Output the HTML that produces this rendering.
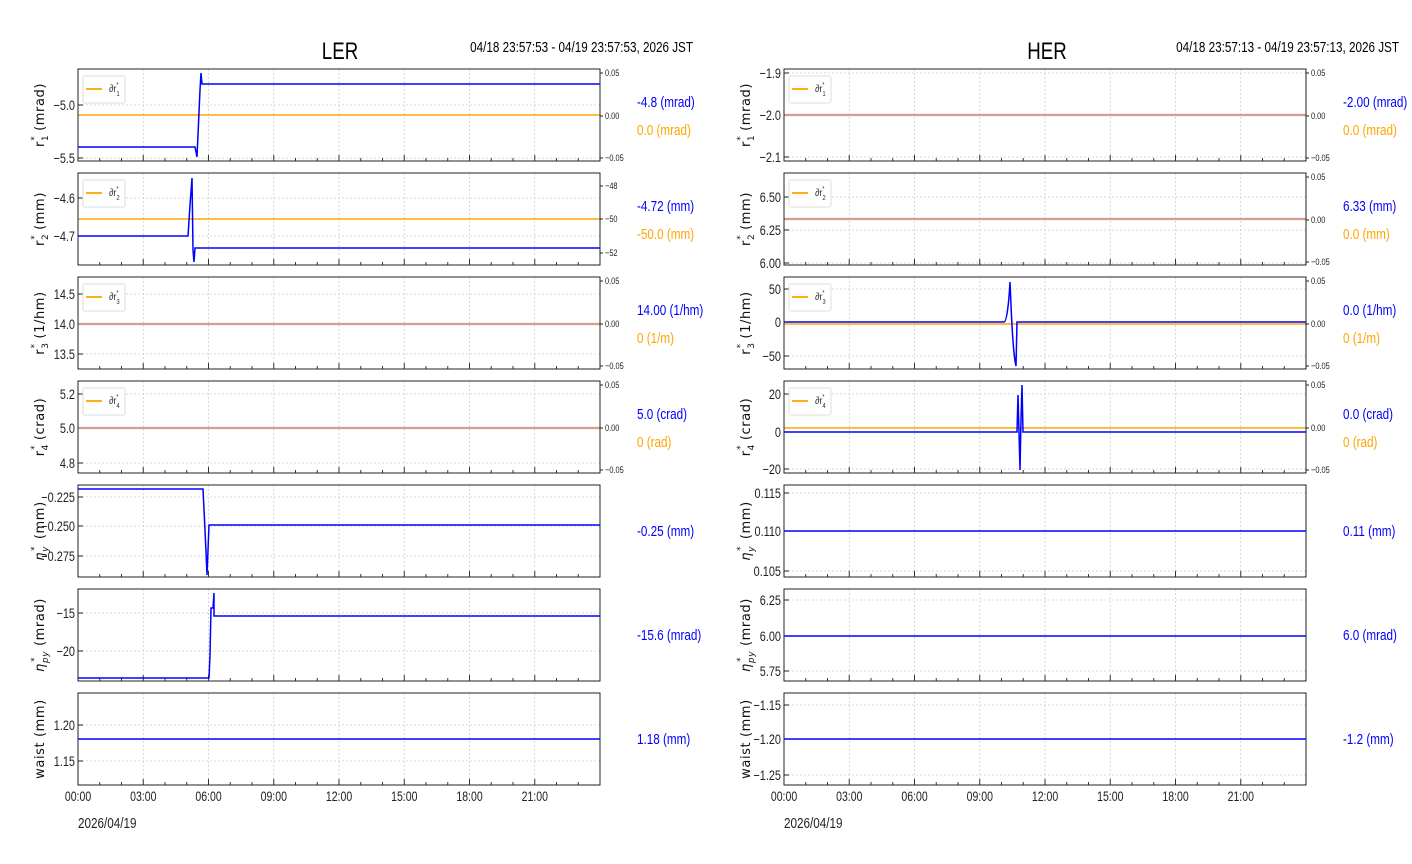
<!DOCTYPE html>
<html><head><meta charset="utf-8"><style>
html,body{margin:0;padding:0;background:#fff;}
svg{display:block;}
text{font-family:"Liberation Sans",sans-serif;}
.yl{font-family:"DejaVu Sans","Liberation Sans",sans-serif;font-size:13px;letter-spacing:0.6px;}
</style></head><body>
<svg id="s" xmlns="http://www.w3.org/2000/svg" width="1412" height="864" viewBox="0 0 1412 864"></svg>
<script>
const S=document.getElementById('s');let o='';
const W=522,H=92,tops=[69,173,277,381,485,589,693];
function T(x,y,size,anchor,fill,c,sx){sx=sx||0.78;return `<text transform="translate(${x},${y}) scale(${sx},1)" font-size="${size}" text-anchor="${anchor}" fill="${fill}">${c}</text>`;}
function panel(x0,i,yt,rt,blue,orange,ylab,leg,vals){
 const y0=tops[i];
 for(let h=3;h<24;h+=3){const x=x0+h*W/24;o+=`<line x1="${x}" y1="${y0}" x2="${x}" y2="${y0+H}" stroke="#ccc" stroke-width="0.8" stroke-dasharray="2,2"/>`;}
 yt.forEach(t=>{o+=`<line x1="${x0}" y1="${t[1]}" x2="${x0+W}" y2="${t[1]}" stroke="#ccc" stroke-width="0.8" stroke-dasharray="2,2"/>`;
  o+=`<line x1="${x0}" y1="${t[1]}" x2="${x0+5}" y2="${t[1]}" stroke="#222"/>`;
  o+=T(x0-3,t[1]+5,14,'end','#222',t[0]);});
 for(let h=1;h<24;h++){const x=x0+h*W/24;const l=h%3==0?6:3;o+=`<line x1="${x}" y1="${y0+H}" x2="${x}" y2="${y0+H-l}" stroke="#333"/>`;}
 if(rt){rt.forEach(t=>{o+=`<line x1="${x0+W}" y1="${t[1]}" x2="${x0+W+3}" y2="${t[1]}" stroke="#222"/>`;
  o+=T(x0+W+5,t[1]+3,9.5,'start','#222',t[0]);});}
 if(blue.ov){o+=`<line x1="${x0}" x2="${x0+W}" y1="${orange}" y2="${orange}" stroke="#d99a8f" stroke-width="2.2"/>`;}
 else{ if(orange)o+=`<line x1="${x0}" x2="${x0+W}" y1="${orange}" y2="${orange}" stroke="#ffa500" stroke-width="1.5"/>`;
  o+=`<path d="${blue.d}" fill="none" stroke="#0000ff" stroke-width="1.5"/>`;}
 o+=`<rect x="${x0}" y="${y0}" width="${W}" height="${H}" fill="none" stroke="#222" stroke-width="1"/>`;
 if(leg){o+=`<rect x="${x0+5}" y="${y0+7}" width="42" height="27" rx="2" fill="#fff" fill-opacity="0.85" stroke="#ddd"/>`;
  o+=`<line x1="${x0+8}" x2="${x0+24}" y1="${y0+20}" y2="${y0+20}" stroke="#ffa500" stroke-width="1.8"/>`;
  o+=T(x0+31,y0+23,10.5,'start','#333',`∂r<tspan font-size="7" dy="4">${leg}</tspan><tspan font-size="7" dx="-4" dy="-9">*</tspan>`,0.85);}
 const cy=y0+H/2;o+=`<text class="yl" transform="translate(${x0-34},${cy}) rotate(-90)" text-anchor="middle" fill="#111">${ylab}</text>`;
 const tx=x0+W+37;
 if(vals.length==2){o+=T(tx,y0+38,15,'start','#0000ff',vals[0])+T(tx,y0+66,15,'start','#ffa500',vals[1]);}
 else o+=T(tx,cy+5,15,'start','#0000ff',vals[0]);
}
const r=(n,u)=>`r<tspan font-size="9" dy="4">${n}</tspan><tspan font-size="9" dx="-6" dy="-11">*</tspan><tspan dy="7">  (${u})</tspan>`;
const eta=(s,u)=>`<tspan font-style="italic">η</tspan><tspan font-size="9" dy="4" font-style="italic">${s}</tspan><tspan font-size="9" dx="${s.length>1?-11:-5}" dy="-11">*</tspan><tspan dy="7" dx="${s.length>1?6:2}">  (${u})</tspan>`;
const R3=[["0.05",73],["0.00",116],["−0.05",158]];
function rts(i){const t=tops[i];return [["0.05",t+4],["0.00",t+47],["−0.05",t+89]];}
let L=78;
panel(L,0,[["−5.0",105],["−5.5",158]],R3,{d:"M78,147H195L197,157L200,90L201,73L202,84H600"},115,r(1,'mrad'),1,["-4.8 (mrad)","0.0 (mrad)"]);
panel(L,1,[["−4.6",198],["−4.7",236]],[["−48",186],["−50",219],["−52",253]],{d:"M78,236H188L190,205L192,178L193,250L194,262L195,248H600"},219,r(2,'mm'),2,["-4.72 (mm)","-50.0 (mm)"]);
panel(L,2,[["14.5",294],["14.0",324],["13.5",354]],rts(2),{d:"",ov:1},324,r(3,'1/hm'),3,["14.00 (1/hm)","0 (1/m)"]);
panel(L,3,[["5.2",394],["5.0",428],["4.8",463]],rts(3),{d:"",ov:1},428,r(4,'crad'),4,["5.0 (crad)","0 (rad)"]);
panel(L,4,[["−0.225",497],["−0.250",526],["−0.275",556]],null,{d:"M78,489H203L205,530L206,552L207,575L208,550L209,525H600"},null,eta('y','mm'),0,["-0.25 (mm)"]);
panel(L,5,[["−15",613],["−20",651]],null,{d:"M78,678H209L210,655L211,608H213L214,593L214,616H600"},null,eta('py','mrad'),0,["-15.6 (mrad)"]);
panel(L,6,[["1.20",725],["1.15",761]],null,{d:"M78,739H600"},null,'waist (mm)',0,["1.18 (mm)"]);
let X=784;
panel(X,0,[["−1.9",73],["−2.0",115],["−2.1",157]],R3,{d:"",ov:1},115,r(1,'mrad'),1,["-2.00 (mrad)","0.0 (mrad)"]);
panel(X,1,[["6.50",197],["6.25",230],["6.00",263]],rts(1),{d:"",ov:1},219,r(2,'mm'),2,["6.33 (mm)","0.0 (mm)"]);
panel(X,2,[["50",289],["0",322],["−50",356]],rts(2),{d:"M784,322H1004C1007,322 1009,300 1010,282C1011,300 1012,350 1016,366L1017,322H1306"},324,r(3,'1/hm'),3,["0.0 (1/hm)","0 (1/m)"]);
panel(X,3,[["20",394],["0",432],["−20",469]],rts(3),{d:"M784,432H1017L1018,395L1019,432L1020,470L1021,420L1022,385L1023,432H1306"},428,r(4,'crad'),4,["0.0 (crad)","0 (rad)"]);
panel(X,4,[["0.115",493],["0.110",531],["0.105",571]],null,{d:"M784,531H1306"},null,eta('y','mm'),0,["0.11 (mm)"]);
panel(X,5,[["6.25",600],["6.00",636],["5.75",671]],null,{d:"M784,636H1306"},null,eta('py','mrad'),0,["6.0 (mrad)"]);
panel(X,6,[["−1.15",705],["−1.20",739],["−1.25",775]],null,{d:"M784,739H1306"},null,'waist (mm)',0,["-1.2 (mm)"]);
[78,784].forEach(x0=>{for(let h=0;h<24;h+=3){o+=T(x0+h*W/24,801,13.5,'middle','#222',String(h).padStart(2,'0')+':00');}
 o+=T(x0,828,15,'start','#222','2026/04/19');});
o+=T(340,59,24,'middle','#000','LER');
o+=T(693,52,15,'end','#000','04/18 23:57:53 - 04/19 23:57:53, 2026 JST');
o+=T(1047,59,24,'middle','#000','HER');
o+=T(1399,52,15,'end','#000','04/18 23:57:13 - 04/19 23:57:13, 2026 JST');
S.innerHTML=o;
</script>
</body></html>
